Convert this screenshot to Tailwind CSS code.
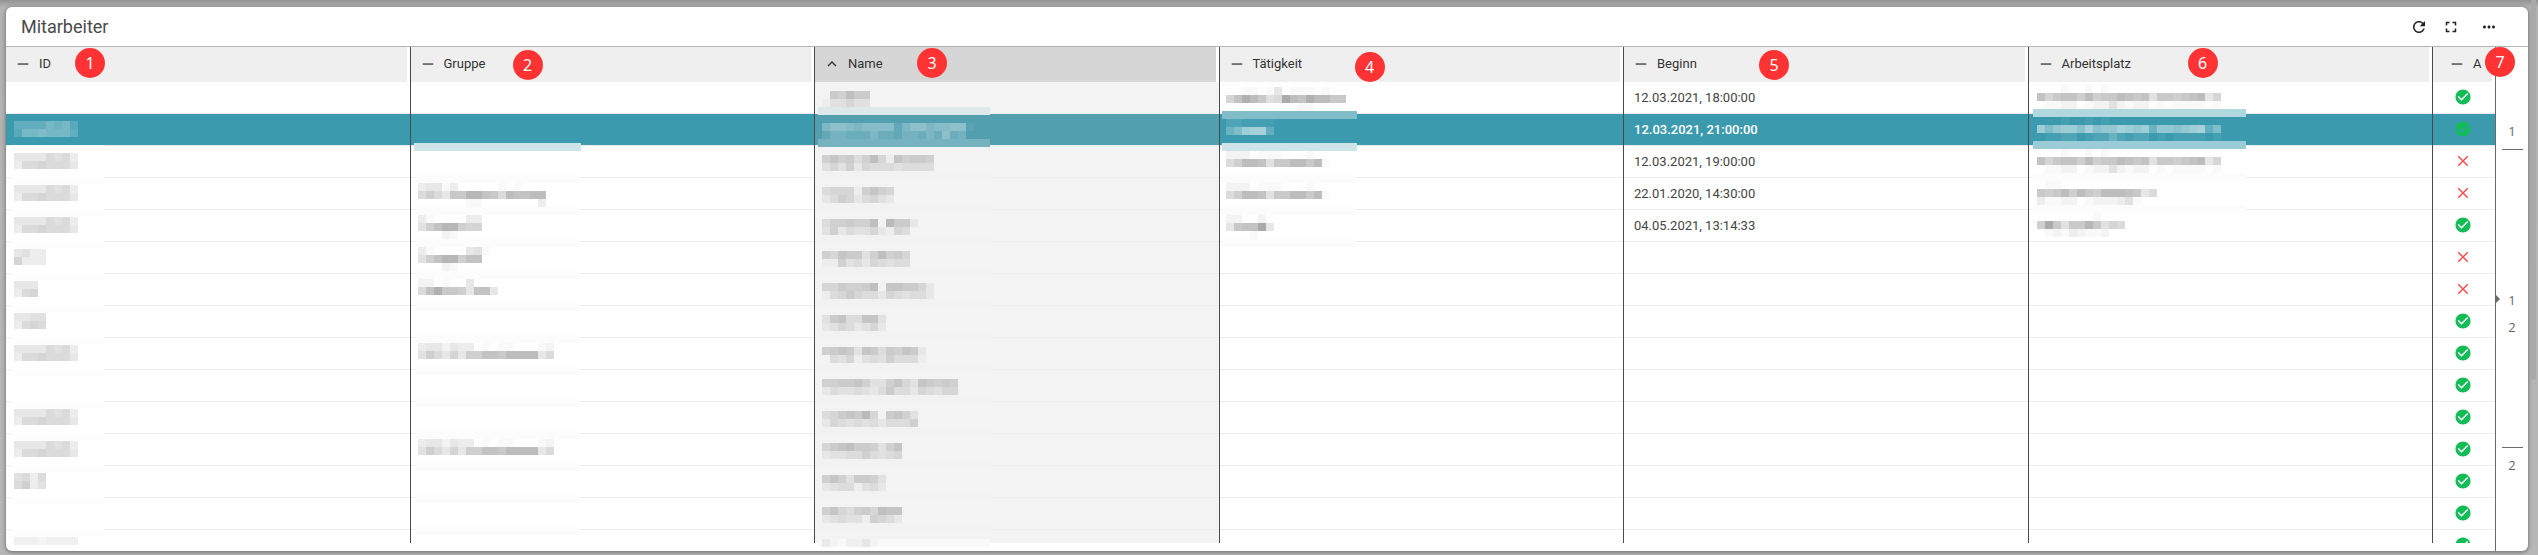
<!DOCTYPE html>
<html lang="de">
<head>
<meta charset="utf-8">
<meta name="viewport" content="width=device-width, initial-scale=1">
<title>Mitarbeiter</title>
<script src="https://cdn.jsdelivr.net/npm/@tailwindcss/browser@4"></script>
</head>
<body class="flex min-h-screen bg-[#b7b7b7] bg-linear-to-b from-[#929292] via-[#b2b2b2] via-[7px] to-[#b7b7b7] font-['Roboto',sans-serif] text-[13px] text-[#444]">

<main class="my-1 mt-[7px] ml-[6px] flex flex-1 flex-col rounded-md bg-white shadow-[0_1px_4px_rgba(0,0,0,0.45)]">
  <header class="flex h-10 items-center border-b border-[#b5b5b5] pr-[30px] pl-[15px]">
    <h1 class="flex-1 text-lg leading-6 text-[#4a4a4a]">Mitarbeiter</h1>
    <button type="button" aria-label="Aktualisieren" class="mr-[14px] size-[18px]">
      <svg viewBox="0 0 24 24" class="size-[18px] fill-[#222]"><path d="M17.65 6.35C16.2 4.9 14.21 4 12 4c-4.42 0-7.99 3.58-7.99 8s3.57 8 7.99 8c3.73 0 6.84-2.55 7.73-6h-2.08c-.82 2.33-3.04 4-5.65 4-3.31 0-6-2.69-6-6s2.69-6 6-6c1.66 0 3.14.69 4.22 1.78L13 11h7V4l-2.35 2.35z"/></svg>
    </button>
    <button type="button" aria-label="Vollbild" class="mr-5 size-[18px]">
      <svg viewBox="0 0 24 24" class="size-[18px] fill-[#222]"><path d="M7 14H5v5h5v-2H7v-3zm-2-4h2V7h3V5H5v5zm12 7h-3v2h5v-5h-2v3zM14 5v2h3v3h2V5h-5z"/></svg>
    </button>
    <button type="button" aria-label="Mehr" class="size-[18px]">
      <svg viewBox="0 0 24 24" class="size-[18px] fill-[#222]"><path d="M6 10c-1.1 0-2 .9-2 2s.9 2 2 2 2-.9 2-2-.9-2-2-2zm12 0c-1.1 0-2 .9-2 2s.9 2 2 2 2-.9 2-2-.9-2-2-2zm-6 0c-1.1 0-2 .9-2 2s.9 2 2 2 2-.9 2-2-.9-2-2-2z"/></svg>
    </button>
  </header>

  <div class="flex flex-1">
    <div class="min-w-0 flex-1 pb-2">
      <table class="w-full table-fixed border-separate border-spacing-0">
        <colgroup><col><col><col><col><col><col><col class="w-[62px]"></colgroup>
        <thead><tr id="head"></tr></thead>
        <tbody id="body"></tbody>
      </table>
    </div>

    <aside class="relative flex w-[33px] flex-col items-center border-l border-[#6a6a6a] font-['Open_Sans',sans-serif] text-[13px] leading-5 text-[#666]">
      <span class="mt-[74px]">1</span>
      <hr class="mt-2 w-[21px] border-t border-[#6a6a6a]">
      <span class="mt-[140px]">1</span>
      <span class="mt-[7px]">2</span>
      <hr class="mt-[110px] w-[21px] border-t border-[#6a6a6a]">
      <span class="mt-[7px]">2</span>
      <svg viewBox="0 0 4 8" class="absolute top-[248px] left-0 h-2 w-1 fill-[#6a6a6a]"><path d="M0 0l4 4-4 4z"/></svg>
    </aside>
  </div>
</main>
<div class="w-[10px] pl-[3px]"><div class="h-[380px] w-[5px] rounded-b bg-[#a9a9a9]"></div></div>

<script>
const minus = '<svg viewBox="0 0 24 24" class="size-[18px] shrink-0 fill-[#333]"><path d="M5 11.2h14v1.7H5z"/></svg>';
const up = '<svg viewBox="0 0 24 24" class="size-[18px] shrink-0 fill-[#333]"><path d="M12 8l-6 6 1.41 1.41L12 10.83l4.59 4.58L18 14z"/></svg>';
const check = '<svg role="img" aria-label="Ja" viewBox="0 0 24 24" class="size-[18px] fill-[#12bc57]"><path d="M12 2C6.48 2 2 6.48 2 12s4.48 10 10 10 10-4.48 10-10S17.52 2 12 2zm-2 15l-5-5 1.41-1.41L10 14.17l7.59-7.59L19 8l-9 9z"/></svg>';
const cross = '<svg role="img" aria-label="Nein" viewBox="0 0 24 24" class="size-[18px] fill-[#fa4d4d]"><path d="M19 6.41L17.59 5 12 10.59 6.41 5 5 6.41 10.59 12 5 17.59 6.41 19 12 13.41 17.59 19 19 17.59 13.41 12z"/></svg>';

const columns = [
  ['ID', 69, 1], ['Gruppe', 102, 3], ['Name', 102, 1], ['Tätigkeit', 135, 5],
  ['Beginn', 135, 3], ['Arbeitsplatz', 159, 1], ['A', 52, 0],
];

document.getElementById('head').innerHTML = columns.map(([label, left, top], i) => `
  <th scope="col" class="relative p-0 text-left font-normal ${i < 6 ? 'border-r border-[#4a4a4a]' : ''}">
    <div class="mr-[3px] h-[35px] ${i === 2 ? 'bg-[#d6d6d6]' : 'bg-[#efefef]'}">
      <button type="button" class="flex h-[33px] w-full items-center gap-[7px] text-[#333] ${i === 6 ? 'pl-[15px]' : 'pl-2'}">${i === 2 ? up : minus}<span>${label}</span></button>
    </div>
    <span class="absolute z-10 flex size-[30px] items-center justify-center rounded-full bg-[#ff3333] font-['Noto_Sans',sans-serif] text-base leading-5 text-white" style="left:${left}px;top:${top}px">${i + 1}</span>
  </th>`).join('');

// Redacted values: each character is the strength of one 8px block, base 16.
const full = ['44446563', '36676664'];
const group = ['344243301011000120', '58647488aa9bbbb46'];
const place = ['000100101', 'a79aa8b899ba9a59989ab47', '01122012252122010111101'];
const task = ['22201110001', '68bba599bb9b1'];
const masks = {
  0: { 1: full, 2: full, 3: full, 4: full, 5: ['4533', '7333'], 6: ['444', '367'], 7: ['4455', '3676'],
       8: full, 10: full, 11: full, 12: ['5636', '6835'], 14: ['33323333'] },
  1: { 3: ['3441300000101', '686499cca96baabb', '0000001100000003'],
       4: ['31000033', '58acc877', '00021'], 5: ['310000451', '58acc8aa', '00021'],
       6: ['22010040', '6ad9984aa4'], 8: group, 11: group },
  2: { 0: ['076977', '133533'], 1: ['5776566662577566771', '244333533244353734'],
       2: ['68674695186776', '35362544434444'], 3: ['455516865', '246524532'],
       4: ['46676690a772', '362433521540'], 5: ['65877369675', '11634254344'],
       6: ['55766790887752', '14575442543442'], 7: ['37844883', '23542352'],
       8: ['6787387476872', '0435134364441'], 9: ['66778633685387676', '24334324744254355'],
       10: ['45787a507863', '254343424446'], 11: ['5789776368', '2334464345'],
       12: ['68637763', '23441342'], 13: ['6854675988', '2343316542'], 14: ['3102241'] },
  3: { 0: ['0011014011101', '7adb956ebadbb99', '00000000011'], 1: ['221111', '57abb4'],
       2: task, 3: task, 4: ['22002', '49aae4', '0001'] },
  5: { 0: place, 1: place, 2: place, 3: ['011', '989b8b98bbba946', '3112201222351'],
       4: ['00000001', '8e9599c9576', '012132112'] },
};
// Per column: mask left, mask top, strip left, strip top, strip width
const geometry = { 0: [8, 7, 4, -1, 94], 1: [7, 5, 3, -3, 167], 2: [7, 9, 3, -7, 172], 3: [6, 5, 2, -3, 135], 5: [8, 3, 4, -5, 213] };
const dates = ['12.03.2021, 18:00:00', '12.03.2021, 21:00:00', '12.03.2021, 19:00:00', '22.01.2020, 14:30:00', '04.05.2021, 13:14:33'];

function stripColor(c, r) {
  if (c === 0) return r >= 2 ? '#fdfdfd' : null;
  if (c === 1) return r === 2 ? '#cde4e9' : r > 2 ? '#fcfcfc' : null;
  if (c === 2) return r === 1 ? '#dde8eb' : r === 2 ? '#76b2bf' : r > 2 ? '#f2f2f2' : null;
  if (c === 3) return [null, '#81bcc9', '#cde4e9', '#fcfcfc', '#fcfcfc', '#fcfcfc'][r];
  if (c === 5) return [null, '#b1d7df', '#9bcbd6', '#fcfcfc', '#fcfcfc'][r];
}

function redaction(c, r) {
  const g = geometry[c];
  if (!g) return '';
  const color = stripColor(c, r);
  let out = color ? `<div class="absolute z-1 h-2" style="left:${g[2]}px;top:${g[3]}px;width:${g[4]}px;background:${color}"></div>` : '';
  if (c === 2 && r === 14) out += `<div class="absolute h-2 bg-[#f9f9f9]" style="left:${g[2]}px;top:9px;width:${g[4]}px"></div>`;
  const m = masks[c][r];
  if (m) {
    const lines = m.map(line => '<div class="flex h-2">' + [...line].map(ch => {
      const n = parseInt(ch, 16);
      const a = r === 1 ? n * 0.05 : n * (r === 14 ? 0.02 : 0.0235);
      return `<i class="h-2 w-2 shrink-0" style="background:rgba(${r === 1 ? '255,255,255' : '0,0,0'},${a.toFixed(3)})"></i>`;
    }).join('') + '</div>').join('');
    out += `<div aria-hidden="true" class="relative" style="padding-left:${g[0]}px;padding-top:${g[1]}px">${lines}</div>`;
  }
  return out;
}

const crosses = [2, 3, 5, 6];
let html = '';
for (let r = 0; r < 15; r++) {
  html += `<tr class="${r === 1 ? 'bg-[#3b9aae] font-medium text-white' : ''}">`;
  for (let c = 0; c < 7; c++) {
    let inner = redaction(c, r);
    if (c === 4 && dates[r]) inner = `<div class="pl-[10px] leading-[31px]">${dates[r]}</div>`;
    if (c === 6) inner = `<div class="flex h-full items-start justify-center overflow-hidden pt-[6px] pr-[3px]">${crosses.includes(r) ? cross : check}</div>`;
    const edge = c < 6 ? 'border-r border-r-[#4a4a4a]' : '';
    const fill = c === 2 ? (r === 1 ? 'bg-[#529fb0]' : 'bg-[#f3f3f3]') : '';
    const line = c === 2 ? 'border-[#efefef]' : 'border-[#ececec]';
    const size = r === 14 ? 'h-[13px]' : 'h-8 border-b ' + line;
    html += `<td class="p-0 align-top ${edge} ${fill}"><div class="relative ${size}">${inner}</div></td>`;
  }
  html += '</tr>';
}
document.getElementById('body').innerHTML = html;
</script>
</body>
</html>
